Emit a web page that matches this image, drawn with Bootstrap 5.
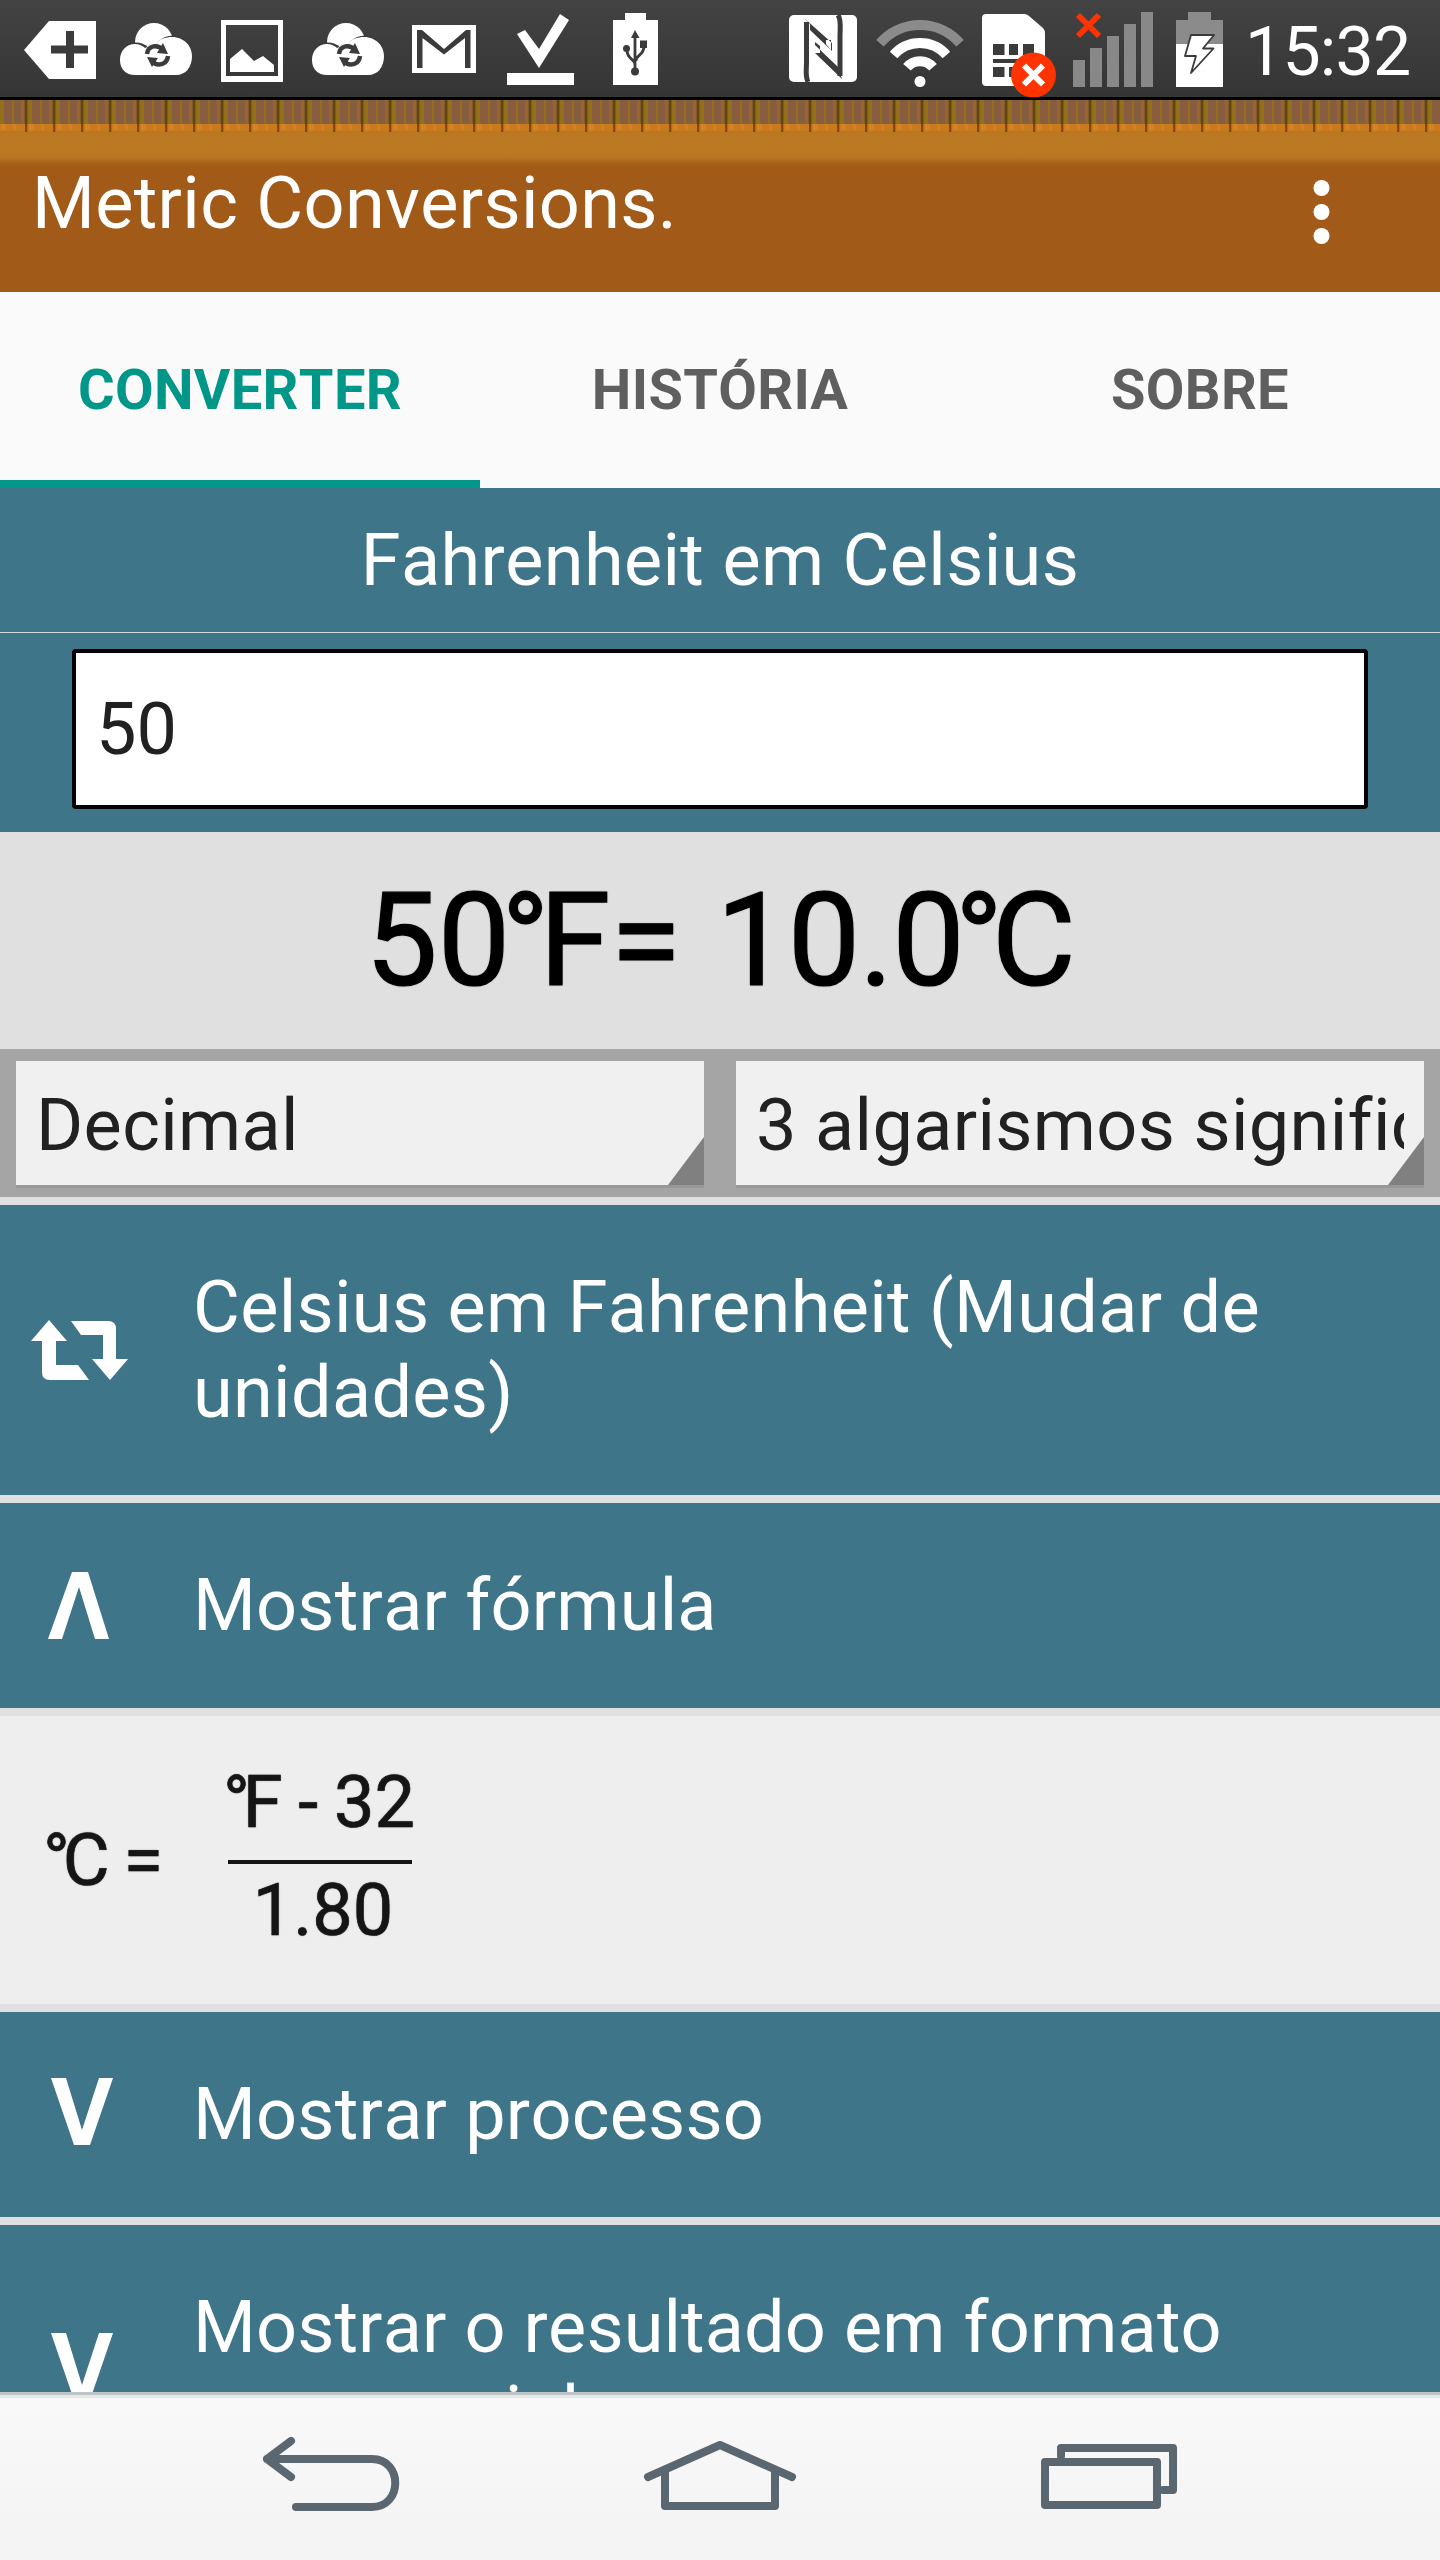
<!DOCTYPE html>
<html lang="pt">
<head>
<meta charset="utf-8">
<meta name="viewport" content="width=device-width, initial-scale=1">
<title>Metric Conversions</title>
<link href="https://cdn.jsdelivr.net/npm/bootstrap@5.3.0/dist/css/bootstrap.min.css" rel="stylesheet">
<style>
body{font-family:Roboto,"Noto Sans",sans-serif;width:1440px;height:2560px;overflow:hidden;background:#e0e0e0;font-size:72px;line-height:85px;font-kerning:none;letter-spacing:.22px}
svg{display:block;flex:none}
.statusbar{height:100px;background:linear-gradient(#434343,#353535);border-bottom:3px solid #000;color:#fff}
.clock{font-size:68px;line-height:97px;padding-top:4px;width:195px;letter-spacing:-.8px}
.appbar{height:192px;background:#a25a18;color:#fff;position:relative}
.ruler{position:absolute;inset:0 0 auto 0;height:72px}
.app-title{position:relative;padding:61px 0 0 32px;line-height:85px;letter-spacing:.33px}
.tabs{height:196px;background:#fafafa}
.tabs .nav-link{height:196px;padding:0;border-radius:0;color:#5f5f5f;font-weight:700;font-size:56px;line-height:197px;letter-spacing:.35px;border-bottom:8px solid transparent}
.tabs .nav-link.active{color:#009688;border-bottom-color:#009688}
.teal{background:#3f7589;color:#fff}
.unit-title{height:145px;padding-top:30px;letter-spacing:.35px;border-bottom:1px solid #d5dadb}
.entry{height:199px;padding:16px 72px 0}
.entry .form-control{height:160px;border:4px solid #000;border-radius:4px;font-size:72px;color:#212121;padding:0 20px;background:#fff;font-family:inherit}
.result{height:217px;background:#e0e0e0;color:#000;font-size:129px;line-height:217px;letter-spacing:0;word-spacing:3px;-webkit-text-stroke:1.2px #000;text-shadow:0 0 2px rgba(0,0,0,.5)}
.result .deg:first-child{margin-right:-.08em}
.result-value{letter-spacing:-1px}
.deg{margin-left:-.07em;margin-right:-.1em}
.pickers{height:148px;background:#a5a5a5;padding:12px 16px;gap:32px}
.picker{height:124px;background:#f0f0f0;color:#212121;padding:22px 20px 0;box-shadow:0 3px 0 #989898;position:relative;flex:1 1 0;min-width:0}
.picker::after{content:"";position:absolute;right:0;bottom:0;width:36px;height:48px;background:#808080;clip-path:polygon(100% 0,100% 100%,0 100%)}
.picker span{display:block;overflow:hidden;white-space:nowrap;letter-spacing:.35px}
.rows{height:1195px;padding-top:8px;gap:8px;overflow:hidden}
.action{padding:60px 120px 60px 0;flex:none}
.action-swap{letter-spacing:.33px}
.action-late{letter-spacing:.12px}
.action-icon{width:193px;flex:none}
.formula{height:288px;background:#eee;color:#151515;flex:none;line-height:72px;letter-spacing:0;word-spacing:-2px;-webkit-text-stroke:.7px #151515;text-shadow:0 0 2px rgba(0,0,0,.4)}
.f-left{width:228px;padding:109px 0 0 48px;word-spacing:-4px}
.f-frac{width:184px;padding-top:51px}
.f-num{white-space:nowrap;border-bottom:4px solid #151515;height:97px}
.f-den{padding:11px 0 0 6px}
.navkeys{height:168px;background:linear-gradient(#f9f9f9,#f3f3f3);border-top:3px solid #bfc4c7;box-shadow:inset 0 3px 0 #e6e9ea}
</style>
</head>
<body class="d-flex flex-column">
<div class="statusbar d-flex flex-none">
  <svg width="108" height="97" viewBox="0 0 108 97"><path fill="#fff" d="M24 50 49 21H96V79H49Z"/><path stroke="#3b3b3b" stroke-width="8" d="M70 31V68M51 49.500H88"/></svg>
  <svg width="96" height="97" viewBox="108 0 96 97"><use href="#cloud"/></svg>
  <svg width="96" height="97" viewBox="204 0 96 97"><path fill="#fff" fill-rule="evenodd" d="M221 20H283V82H221ZM226 25V76H278V25Z"/><path fill="#fff" d="M230 72V59L242 49 254 61 263 56 274 65V72Z"/></svg>
  <svg width="96" height="97" viewBox="300 0 96 97"><use href="#cloud" x="192"/></svg>
  <svg width="96" height="97" viewBox="396 0 96 97"><path fill="#fff" d="M412 25H476V73H412Z"/><path fill="#3b3b3b" d="M417 68V30H422L444 49 466 30H470.500V68H465V38L444 54.500 422.500 38V68Z"/></svg>
  <svg width="96" height="97" viewBox="492 0 96 97"><path fill="#fff" d="M507 73H574V85H507ZM517 34 525 30 539 49 560 14 569 20 539 68Z"/></svg>
  <svg width="96" height="97" viewBox="588 0 96 97"><path fill="#fff" d="M625 13H646V20H658V85H613V20H625Z"/><g fill="none" stroke="#3b3b3b" stroke-width="2.800"><path d="M635 36V72M627 50C627 60 635 58 635 65M644 46C644 56 636 54 636 61"/></g><g fill="#3b3b3b"><path d="M631 38 635 30 639.500 38ZM640 40.500H647V48H640Z"/><circle cx="626.500" cy="48.500" r="3.500"/><circle cx="635" cy="71.500" r="4"/></g></svg>
  <div class="ms-auto d-flex">
  <svg width="80" height="97" viewBox="784 0 80 97"><rect x="789" y="15" width="68" height="67" rx="5" fill="#fff"/><g fill="none" stroke="#3b3b3b" stroke-width="5"><path d="M808 82C805 76 806.500 70 806.500 62V22M838 15C841.500 20 840 28 840 36V76"/></g><path fill="#3b3b3b" d="M804 18 832 43V51L810 30V24ZM842 79 815 53V45L838 67ZM831 40H826V44L831 50ZM815 53H820V46L815 42Z"/></svg>
  <svg width="108" height="97" viewBox="864 0 108 97"><g fill="none" stroke="#fff" stroke-width="10"><path stroke="#8b8b8b" d="M880 43.200A53 53 0 0 1 960 43.200"/><path d="M893.600 55A35 35 0 0 1 946.400 55"/><path d="M907 67.200A17 17 0 0 1 933 67.200"/></g><circle cx="920" cy="81.500" r="5.500" fill="#fff"/></svg>
  <svg width="92" height="97" viewBox="972 0 92 97"><path fill="#fff" d="M986 14H1024Q1027 14 1029 16L1043 28Q1045 30 1045 34V86H986Q982 86 982 82V18Q982 14 986 14Z"/><path fill="#3b3b3b" d="M993 44H1004.500V55H993ZM1009 44H1018V55H1009ZM1023 44H1034V55H1023ZM993 59H1034V63H993ZM993 67H1004.500V77H993ZM1009 67H1018V77H1009Z"/><circle cx="1033.500" cy="75" r="22.500" fill="#f30"/><path stroke="#fff" stroke-width="6" d="M1024 65.500 1043 84.500M1043 65.500 1024 84.500"/></svg>
  <svg width="101" height="97" viewBox="1064 0 101 97"><path fill="#888" d="M1073 60H1085V87H1073ZM1090 48H1102V87H1090ZM1107 36H1119V87H1107ZM1124 24H1136V87H1124ZM1141 12H1153V87H1141Z"/><path stroke="#f30" stroke-width="6" d="M1078 15 1099 36M1099 15 1078 36"/></svg>
  <svg width="80" height="97" viewBox="1165 0 80 97"><path fill="#8b8b8b" d="M1188 12H1211V20H1223V46H1176V20H1188Z"/><path fill="#fff" d="M1176 44H1223V87H1176Z"/><path fill="#fff" stroke="#3b3b3b" stroke-width="1.800" stroke-linejoin="round" d="M1191 35H1214L1203 48.500H1213.500L1191 73 1196 56H1185Z"/></svg>
  <div class="clock">15:32</div>
  </div>
</div>

<header class="appbar">
  <svg class="ruler" width="1440" height="72">
    <defs>
      <linearGradient id="wood" x1="0" y1="0" x2="0" y2="1"><stop offset="0" stop-color="#b97824"/><stop offset=".75" stop-color="#bc7822"/><stop offset=".8" stop-color="#b87623"/><stop offset=".88" stop-color="#a5621a"/><stop offset=".93" stop-color="#a35b17"/><stop offset="1" stop-color="#a25a18"/></linearGradient>
      <pattern id="ticks" width="28" height="72" patternUnits="userSpaceOnUse">
        <path fill="#8c5c40" d="M0 0H28V24H0Z"/>
        <path fill="#94740f" opacity=".8" d="M0 0H4V24H0ZM12 0H14V24H12Z"/><path fill="#7a6040" opacity=".6" d="M5 0H8V24H5ZM15 0H17V24H15ZM18.500 0H20V24H18.500Z"/><path fill="#a56b18" opacity=".5" d="M21 0H24V24H21Z"/>
        <path fill="#c87a1e" d="M0 24H28V31H0Z"/><path fill="#de851c" opacity=".6" d="M1 24H6V30H1ZM13 24H16V30H13Z"/>
        <path fill="#5f480b" d="M24.800 0H27.300V24H24.800Z"/><path fill="#7f480c" d="M25 24H27.300V32H25Z"/>
      </pattern>
      <g id="cloud"><circle cx="154" cy="42" r="19" fill="#fff"/><circle cx="136" cy="60" r="17.500" fill="#3b3b3b"/><circle cx="173" cy="56" r="20.500" fill="#3b3b3b"/><path fill="#fff" d="M135 75C126 75 120 69 120 60C120 51 126 44 135 44C139 44 143 46 145 48L157 43C160 39 166 37 172 37C184 37 192 46 192 56C192 67 186 75 176 75Z"/><g fill="none" stroke="#3b3b3b" stroke-width="4.500"><path d="M147 54C148 45 158 44 163 50M168 56C167 65 157 67 152 61"/></g><path fill="#3b3b3b" d="M163 43 168 54 157 53ZM152 67 147 57 158 58Z"/></g>
    </defs>
    <rect width="1440" height="72" fill="url(#wood)"/><rect width="1440" height="32" fill="url(#ticks)"/>
  </svg>
  <div class="d-flex justify-content-between">
    <div class="app-title">Metric Conversions.</div>
    <svg width="220" height="192" viewBox="1220 100 220 192" class="position-relative"><g fill="#fff"><circle cx="1321.500" cy="188" r="8"/><circle cx="1321.500" cy="212" r="8"/><circle cx="1321.500" cy="236" r="8"/></g></svg>
  </div>
</header>

<nav class="tabs nav nav-justified">
  <a class="nav-link col-4 active">CONVERTER</a>
  <a class="nav-link col-4">HISTÓRIA</a>
  <a class="nav-link col-4">SOBRE</a>
</nav>

<main>
  <div class="teal unit-title text-center">Fahrenheit em Celsius</div>
  <div class="teal entry"><input class="form-control shadow-none" value="50"></div>
  <div class="result text-center">50<span class="deg">°</span>F= <span class="result-value">10.0<span class="deg">°</span>C</span></div>
  <div class="pickers d-flex">
    <div class="picker"><span>Decimal</span></div>
    <div class="picker"><span>3 algarismos significativos</span></div>
  </div>
  <div class="rows d-flex flex-column">
    <div class="teal action action-swap d-flex align-items-center">
      <div class="action-icon"><svg width="193" height="80" viewBox="0 1310 193 80"><path fill="#fff" d="M49 1320 67 1341H56V1365H78L89 1380H50Q42 1380 42 1372V1341H31ZM71 1321H108Q116 1321 116 1329V1359H128L110 1380 92 1359H103V1335H81Z"/></svg></div>
      <div>Celsius em Fahrenheit (Mudar de<br>unidades)</div>
    </div>
    <div class="teal action d-flex align-items-center">
      <div class="action-icon"><svg width="193" height="70" viewBox="0 1570 193 70"><path fill="#fff" d="M72 1571H88L109 1638H95L79 1586 62 1638H48Z"/></svg></div>
      <div>Mostrar fórmula</div>
    </div>
    <div class="formula d-flex">
      <div class="f-left"><span class="deg">°</span>C =</div>
      <div class="f-frac"><div class="f-num"><span class="deg">°</span>F - 32</div><div class="f-den text-center">1.80</div></div>
    </div>
    <div class="teal action d-flex align-items-center">
      <div class="action-icon"><svg width="193" height="76" viewBox="0 2076 193 76"><path fill="#fff" d="M51 2077H66L82 2129 99 2077H113L90 2144H74Z"/></svg></div>
      <div>Mostrar processo</div>
    </div>
    <div class="teal action action-late d-flex align-items-center">
      <div class="action-icon"><svg width="193" height="76" viewBox="0 2076 193 76"><path fill="#fff" d="M51 2077H66L82 2129 99 2077H113L90 2144H74Z"/></svg></div>
      <div>Mostrar o resultado em formato<br>exponencial</div>
    </div>
  </div>
</main>

<footer class="navkeys">
  <svg width="1440" height="165" viewBox="0 2395 1440 165"><g fill="none" stroke="#5b6770" stroke-width="8" stroke-linecap="round" stroke-linejoin="round"><path d="M291 2441 267 2459 291 2477M267 2459H372C403 2459 403 2507 372 2507H296"/><path d="M648 2477 720 2445 792 2477M665 2472V2506H775V2472"/><path d="M1061 2456V2448H1173V2490H1163M1045 2462H1157V2505H1045Z"/></g></svg>
</footer>
<script src="https://cdn.jsdelivr.net/npm/bootstrap@5.3.0/dist/js/bootstrap.bundle.min.js"></script>
</body>
</html>
